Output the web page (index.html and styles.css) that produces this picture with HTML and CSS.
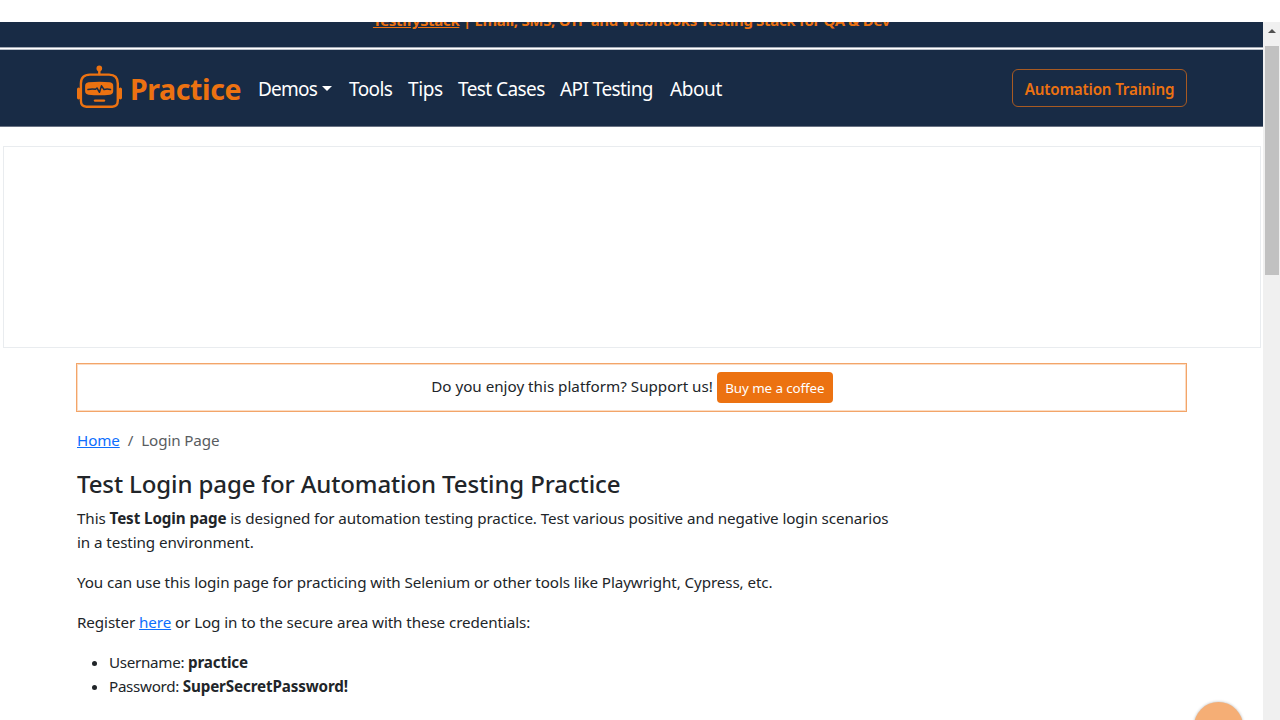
FILE: index.html
```html
<!DOCTYPE html>
<html lang="en">
<head>
<meta charset="utf-8">
<title>Test Login Page for Automation Testing Practice</title>
<link rel="stylesheet" href="styles.css">
</head>
<body>
<div class="viewport">
  <div class="page">
    <div class="promo"><p class="promo-text"><a class="promo-link" href="#">TestifyStack</a> | Email, SMS, OTP and Webhooks Testing Stack for QA &amp; Dev</p></div>
    <nav class="navbar">
      <a class="brand" href="#">
        <svg class="brand-icon" viewBox="0 0 46 44" width="46" height="44" fill="none" stroke="#ec7211" stroke-width="2.4" stroke-linecap="round" stroke-linejoin="round">
          <circle cx="22.3" cy="3.4" r="2.8" fill="#ec7211" stroke="none"/>
          <path d="M22.300 4v5"/>
          <path d="M13 9.600h19q8.800 0 8.800 9v17q0 6-5.500 6.100h-26q-5.400-.1-5.400-6.100v-17q0-9 9.100-9z"/>
          <path d="M1.600 24.200v8.600M43.400 24.200v8.600" stroke-width="3.200"/>
          <path d="M11.500 17.300q11-1.300 21.500 0q3.400.5 3.200 3.700v5q0 3.200-3.200 3.700q-10.500 1.300-21.500 0q-3.400-.5-3.400-3.700v-5q0-3.200 3.400-3.700z" fill="#ec7211" stroke="none"/>
          <path d="M11 24.500q4-1 7.500-.2l1.500-1.300 2.500 4.300 2-6.500 2.500 3.700q3-.8 6.500 0" stroke="#182b45" stroke-width="1.500"/>
          <path d="M18 35.600h9"/>
        </svg>
        <span class="brand-name">Practice</span>
      </a>
      <div class="menu">
        <a class="menu-item w-demos" href="#">Demos<span class="caret"></span></a>
        <a class="menu-item w-tools" href="#">Tools</a>
        <a class="menu-item w-tips" href="#">Tips</a>
        <a class="menu-item w-cases" href="#">Test Cases</a>
        <a class="menu-item w-api" href="#">API Testing</a>
        <a class="menu-item w-about" href="#">About</a>
      </div>
      <a class="training" href="#">Automation Training</a>
    </nav>
    <div class="ad-slot"></div>
    <main class="container">
      <div class="support"><span class="support-text">Do you enjoy this platform? Support us!</span><a class="coffee" href="#">Buy me a coffee</a></div>
      <nav class="breadcrumb"><a class="link" href="#">Home</a><span class="slash">/</span><span>Login Page</span></nav>
      <h1 class="title">Test Login page for Automation Testing Practice</h1>
      <p class="para">This <b>Test Login page</b> is designed for automation testing practice. Test various positive and negative login scenarios<br>in a testing environment.</p>
      <p class="para">You can use this login page for practicing with Selenium or other tools like Playwright, Cypress, etc.</p>
      <p class="para">Register <a class="link" href="#">here</a> or Log in to the secure area with these credentials:</p>
      <ul class="creds">
        <li>Username: <b>practice</b></li>
        <li>Password: <b>SuperSecretPassword!</b></li>
      </ul>
    </main>
    <div class="to-top"></div>
  </div>
  <div class="scrollbar"><span class="arrow-up"></span><div class="thumb"></div></div>
</div>
</body>
</html>
```
FILE: styles.css
```css
* { box-sizing: border-box; }
body { margin: 0; background: #fff; color: #212529; font: 15.2px/24px "Noto Sans", "Open Sans", sans-serif; overflow: hidden; }
a { text-decoration: none; }
.viewport { display: flex; height: 720px; padding-top: 22px; }
.page { position: relative; width: 1263px; height: 698px; overflow: hidden; }
.promo { height: 26px; background: #182b45; border-bottom: 1px solid #a3aab5; overflow: hidden; color: #ec7211; text-align: center; }
.promo-text { margin: -14px 0 0; font-weight: 700; font-size: 15px; letter-spacing: -.32px; }
.promo-link { color: inherit; text-decoration: underline; }
.navbar { display: flex; align-items: center; height: 79px; border-top: 1px solid #fff; border-bottom: 1px solid #697283; background: #182b45; box-shadow: inset 0 1px 0 #b9bfc7; padding: 1px 76px 0 77px; }
.brand { display: flex; align-items: center; width: 181px; color: #ec7211; }
.brand-icon { display: block; margin: -3px 7px 0 0; }
.brand-name { margin-top: 1px; font: 700 28.500px/40px "Noto Sans", sans-serif; letter-spacing: -.4px; }
.menu { display: flex; flex: 1; margin-top: 2px; }
.menu-item { color: #fff; font-size: 19px; line-height: 30px; letter-spacing: -.57px; white-space: nowrap; }
.w-demos { width: 91px; letter-spacing: -.75px; }
.w-tools { width: 59px; }
.w-tips { width: 50px; letter-spacing: -.4px; }
.w-cases { width: 102px; }
.w-api { width: 110px; }
.w-about { letter-spacing: -.4px; }
.caret { display: inline-block; margin-left: 5px; vertical-align: 5px; border: 5.500px solid transparent; border-top-color: #fff; border-bottom: 0; }
.training { width: 175px; height: 38px; border: 1px solid #a75a22; border-radius: 6px; color: #ec7211; font-weight: 600; font-size: 15.2px; line-height: 38px; letter-spacing: -.17px; text-align: center; white-space: nowrap; }
.ad-slot { margin: 19px 2px 0 3px; height: 202px; border: 1px solid #e9ecef; }
.container { margin: 15px 76px 0; }
.support { display: flex; align-items: center; justify-content: center; height: 49px; border: 1px solid #f3a569; box-shadow: inset 0 0 0 1px #fbdcc4; }
.support-text { margin-top: -3px; margin-right: 4px; }
.coffee { width: 116px; height: 31px; margin-right: -1px; border-radius: 4px; background: #ec7211; color: #fff; font-size: 13.400px; line-height: 32px; letter-spacing: -.1px; text-align: center; white-space: nowrap; }
.breadcrumb { display: flex; margin: 16px 1px 0; color: #595c5f; letter-spacing: -.12px; }
.slash { margin: 0 8px; }
.link { color: #0d6efd; text-decoration: underline; }
.title { margin: 17px 1px 7px; font-size: 24px; line-height: 30px; font-weight: 500; letter-spacing: -.115px; white-space: nowrap; }
.para { margin: 0 1px 16px; letter-spacing: -.09px; white-space: nowrap; }
.creds { margin: 0 1px; padding-left: 32px; letter-spacing: -.3px; }
.creds b { letter-spacing: -.13px; }
.to-top { position: absolute; left: 1194px; top: 680px; width: 49px; height: 49px; border-radius: 50%; background: #f5ae75; box-shadow: 0 0 3px rgba(0,0,0,.3); }
.scrollbar { width: 17px; background: #f0f0f0; }
.arrow-up { display: block; width: 8px; height: 4px; margin: 7px 0 13px 5px; background: #505050; clip-path: polygon(50% 0, 100% 100%, 0 100%); }
.thumb { width: 14px; height: 229px; margin-left: 2px; background: #c1c1c1; }
```
